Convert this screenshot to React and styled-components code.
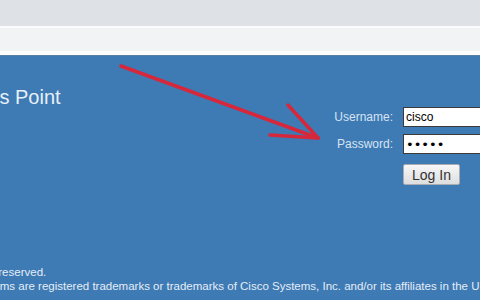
import React from "react";
import styled, { createGlobalStyle } from "styled-components";

const Global = createGlobalStyle`
  html, body { margin: 0; padding: 0; width: 480px; height: 300px; overflow: hidden; }
  body { font-family: "Liberation Sans", Arial, sans-serif; }
  #root { width: 480px; height: 300px; }
`;

const Page = styled.div`
  position: relative;
  width: 480px;
  height: 300px;
  display: flex;
  flex-direction: column;
  overflow: hidden;
`;

const TopBar = styled.div`
  height: 26px;
  background: #dee1e6;
`;

const AddressBand = styled.div`
  height: 23px;
  background: #f1f3f5;
  border-top: 2px solid #fbfcfd;
  border-bottom: 4px solid #ffffff;
`;

const Main = styled.main`
  flex: 1;
  background: #3e7ab4;
  border-top: 1px solid #5a7fa3;
  display: flex;
  flex-direction: column;
  color: #e6eef7;
`;

const TopRow = styled.div`
  display: flex;
  justify-content: space-between;
  align-items: flex-start;
`;

const Title = styled.h1`
  margin: 30px 0 0 -55px;
  font-size: 20px;
  line-height: 23px;
  font-weight: normal;
  color: #e8f0f8;
  white-space: nowrap;
`;

const Form = styled.form`
  margin: 51px -30px 0 0;
  display: grid;
  grid-template-columns: auto 107px;
  column-gap: 10px;
  row-gap: 7px;
  align-items: center;
`;

const Label = styled.label`
  justify-self: end;
  font-size: 12px;
  color: #d6e4f2;
`;

const Field = styled.input`
  box-sizing: border-box;
  height: 20px;
  width: 107px;
  margin: 0;
  padding: 0 2px;
  border: 1px solid #3a3a3a;
  border-right: none;
  background: #ffffff;
  font-family: ${(p) =>
    p.type === "password" ? '"DejaVu Sans", sans-serif' : '"Liberation Sans", Arial, sans-serif'};
  font-size: ${(p) => (p.type === "password" ? "13px" : "12px")};
  letter-spacing: 0;
  color: #000;
  outline: none;
`;

const Button = styled.button`
  grid-column: 2;
  justify-self: start;
  margin-top: 3px;
  width: 57px;
  height: 21px;
  padding: 0;
  border: 1px solid #a9adb2;
  border-radius: 2px;
  background: linear-gradient(#f7f7f7, #dedede);
  font-family: "Liberation Sans", Arial, sans-serif;
  font-size: 14px;
  color: #333;
`;

const Footer = styled.footer`
  margin-top: auto;
  padding-bottom: 7px;
  font-size: 11.5px;
  line-height: 14px;
  color: #e4edf6;
  white-space: nowrap;
`;

const Line = styled.div`
  margin-left: ${(p) => p.$indent}px;
`;

const Arrow = styled.svg`
  position: absolute;
  left: 0;
  top: 0;
  pointer-events: none;
`;

export default function App() {
  return (
    <Page>
      <Global />
      <TopBar />
      <AddressBand />
      <Main>
        <TopRow>
          <Title>Access Point</Title>
          <Form onSubmit={(e) => e.preventDefault()}>
            <Label htmlFor="u">Username:</Label>
            <Field id="u" type="text" defaultValue="cisco" />
            <Label htmlFor="p">Password:</Label>
            <Field id="p" type="password" defaultValue="cisco" />
            <Button type="submit">Log In</Button>
          </Form>
        </TopRow>
        <Footer>
          <Line $indent={-49}>All rights reserved.</Line>
          <Line $indent={-61}>
            Cisco Systems are registered trademarks or trademarks of Cisco Systems, Inc. and/or its affiliates in the U.S. and certain other countries.
          </Line>
        </Footer>
      </Main>
      <Arrow width="480" height="300" viewBox="0 0 480 300">
        <g stroke="#d6273b" strokeWidth="3.5" strokeLinecap="round" fill="none">
          <line x1="121" y1="66" x2="318" y2="138" />
          <line x1="288" y1="105" x2="318" y2="138" />
          <line x1="270" y1="135" x2="318" y2="138" />
        </g>
      </Arrow>
    </Page>
  );
}
